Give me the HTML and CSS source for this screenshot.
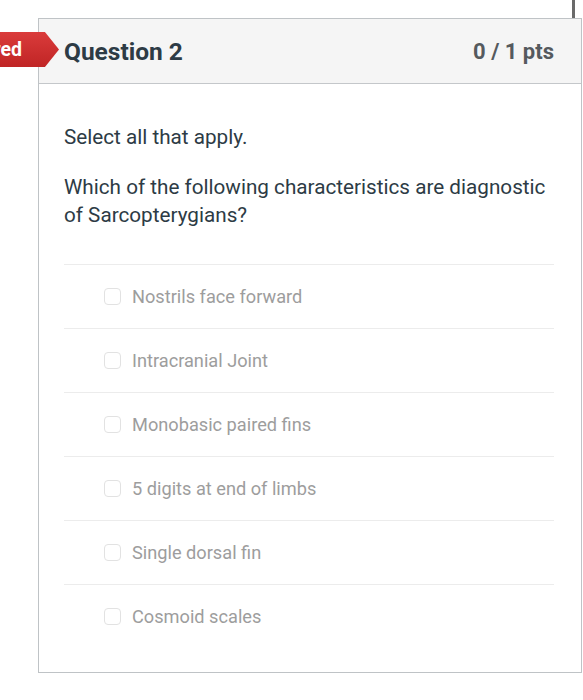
FILE: index.html
```html
<!DOCTYPE html>
<html>
<head>
<meta charset="utf-8">
<link rel="stylesheet" href="styles.css">
</head>
<body>
<div class="page">
  <div class="scroll-mark"></div>
  <div class="question">
    <div class="tag">Unanswered</div>
    <div class="q-header">
      <span class="q-title">Question 2</span>
      <span class="q-pts">0 / 1 pts</span>
    </div>
    <div class="q-body">
      <p class="q-text">Select all that apply.</p>
      <p class="q-text q-second">Which of the following characteristics are diagnostic of Sarcopterygians?</p>
      <div class="answers">
        <div class="answer"><span class="box"></span><span class="label">Nostrils face forward</span></div>
        <div class="answer"><span class="box"></span><span class="label">Intracranial Joint</span></div>
        <div class="answer"><span class="box"></span><span class="label">Monobasic paired fins</span></div>
        <div class="answer"><span class="box"></span><span class="label">5 digits at end of limbs</span></div>
        <div class="answer"><span class="box"></span><span class="label">Single dorsal fin</span></div>
        <div class="answer"><span class="box"></span><span class="label">Cosmoid scales</span></div>
      </div>
    </div>
  </div>
</div>
</body>
</html>
```
FILE: styles.css
```css
* { box-sizing: border-box; }
html, body { margin: 0; padding: 0; background: #fff; }
body { font-family: Roboto, "Liberation Sans", sans-serif; color: #2d3b45; }
.page { position: relative; width: 583px; height: 700px; padding: 18px 1px 0 38px; overflow: hidden; }
.scroll-mark { position: absolute; left: 572px; top: 0; width: 3px; height: 19px; background: #6a6a6a; }
.question { position: relative; width: 544px; border: 1px solid #bfc3c6; }
.tag {
  position: absolute; left: -136px; top: 13px; width: 156px; height: 35px;
  background: linear-gradient(#da3b3b, #c02525);
  clip-path: polygon(0 0, 91% 0, 100% 50%, 91% 100%, 0 100%);
  color: #fff; font-weight: 700; font-size: 19.5px; line-height: 35px;
  text-align: right; padding-right: 37px; white-space: nowrap;
}
.q-header {
  height: 65px; background: #f5f5f5; border-bottom: 1px solid #c4c7ca;
  display: flex; align-items: center; justify-content: space-between;
  padding: 0 27px 0 25px;
}
.q-title { font-size: 24.5px; font-weight: 700; color: #2d3b45; }
.q-pts { font-size: 22px; font-weight: 700; color: #555a5e; }
.q-body { padding: 39px 27px 24px 25px; }
.q-text { margin: 0; font-size: 20.7px; line-height: 28px; color: #2d3b45; }
.q-second { margin-top: 22px; }
.answers { margin-top: 35px; }
.answer {
  height: 64px; border-top: 1px solid #ececec;
  display: flex; align-items: center; padding-left: 40px;
}
.box { width: 17px; height: 17px; border: 1px solid #e2e2e2; border-radius: 4px; margin-right: 11px; background: #fff; }
.label { font-size: 18.2px; color: #9d9d9d; }
```
